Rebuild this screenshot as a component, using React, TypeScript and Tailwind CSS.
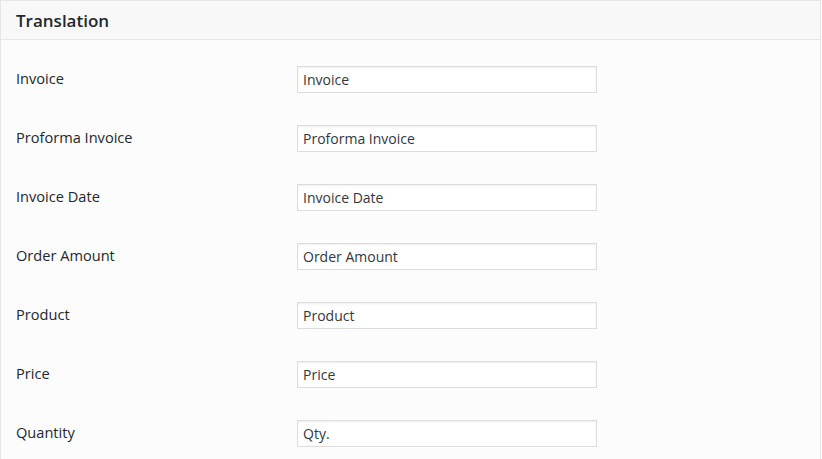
import React from "react";

const rows: [string, string][] = [
  ["Invoice", "Invoice"],
  ["Proforma Invoice", "Proforma Invoice"],
  ["Invoice Date", "Invoice Date"],
  ["Order Amount", "Order Amount"],
  ["Product", "Product"],
  ["Price", "Price"],
  ["Quantity", "Qty."],
];

export default function App() {
  return (
    <div className="w-[822px] h-[459px] overflow-hidden bg-white" style={{ fontFamily: '"Open Sans", "Noto Sans", sans-serif' }}>
      <div className="w-[821px] h-[480px] border border-[#e5e5e5] bg-[#fcfcfc]">
        <div className="h-[39px] border-b border-[#e5e5e5] bg-[#f8f8f8] flex items-center pl-[15px]">
          <h2 className="text-[17px] font-semibold text-[#23282d] leading-none">Translation</h2>
        </div>
        <div className="pt-[26px] flex flex-col gap-[32px]">
          {rows.map(([label, value]) => (
            <div key={label} className="flex items-center h-[27px]">
              <div className="w-[296px] pl-[15px] text-[14.6px] leading-none text-[#23282d] -mt-[2px]">{label}</div>
              <input
                readOnly
                value={value}
                className="w-[300px] h-[27px] border border-[#dddddd] bg-white px-[5px] text-[14px] text-[#32373c] outline-none shadow-[inset_0_1px_2px_rgba(0,0,0,0.07)]"
                style={{ fontFamily: '"Open Sans", "Noto Sans", sans-serif' }}
              />
            </div>
          ))}
        </div>
      </div>
    </div>
  );
}
